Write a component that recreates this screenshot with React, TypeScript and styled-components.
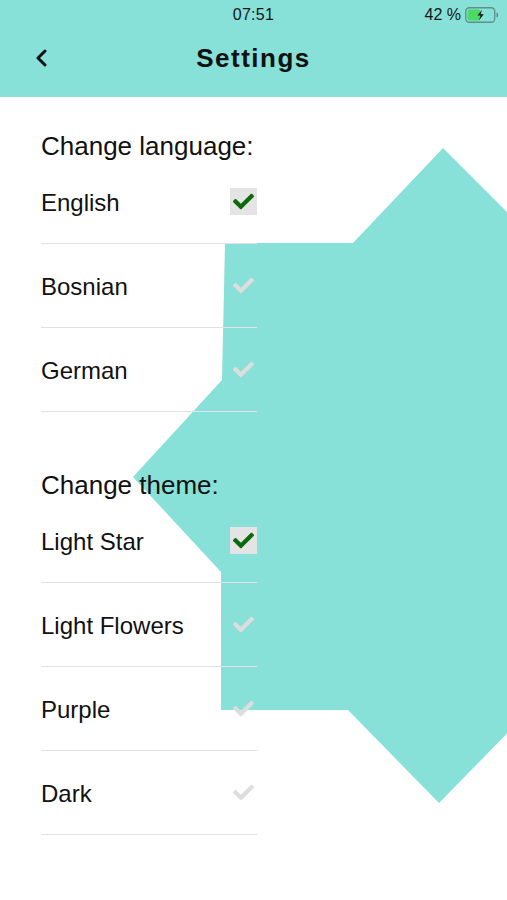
import React from 'react'
import styled, { createGlobalStyle } from 'styled-components'
import { FaCheck } from 'react-icons/fa'

const GlobalStyle = createGlobalStyle`
  body {
    margin: 0;
    background: #ffffff;
    font-family: "Liberation Sans", Arial, sans-serif;
    color: #111111;
  }
`

const TEAL = '#87e1d8'

const Page = styled.div`
  position: relative;
  width: 507px;
  min-height: 900px;
  background: #ffffff;
  overflow: hidden;
`

// big star sits behind the list
const StarLayer = styled.svg`
  position: absolute;
  top: 0;
  left: 0;
  width: 507px;
  height: 900px;
  z-index: 0;
  pointer-events: none;
`

const Header = styled.header`
  position: relative;
  z-index: 1;
  background: ${TEAL};
  padding-bottom: 11px;
`

const StatusBar = styled.div`
  height: 30px;
  display: grid;
  grid-template-columns: 1fr auto 1fr;
  align-items: center;
  font-size: 16px;
  color: #151515;
`

const Time = styled.span`
  grid-column: 2;
  letter-spacing: 0.3px;
`

const BatteryArea = styled.div`
  grid-column: 3;
  justify-self: end;
  display: flex;
  align-items: center;
  gap: 4px;
  padding-right: 8px;
`

const NavBar = styled.div`
  height: 56px;
  display: grid;
  grid-template-columns: 80px 1fr 80px;
  align-items: center;
`

const BackButton = styled.button`
  background: none;
  border: none;
  padding: 0 0 0 35px;
  height: 100%;
  display: flex;
  align-items: center;
  cursor: pointer;
`

const Title = styled.h1`
  margin: 0;
  text-align: center;
  font-size: 26px;
  font-weight: 700;
  letter-spacing: 1.5px;
  color: #111111;
`

const Content = styled.main`
  position: relative;
  z-index: 1;
  padding: 35px 41px 40px;
`

const Section = styled.section<{ $gap?: number }>`
  margin-top: ${p => p.$gap ?? 0}px;
`

const SectionTitle = styled.h2`
  margin: 0;
  font-size: 26px;
  font-weight: 400;
  line-height: 28px;
  color: #111111;
`

const List = styled.ul`
  list-style: none;
  margin: 0;
  padding: 0;
  width: 216px;
`

const Row = styled.li`
  height: 83px;
  box-sizing: content-box;
  display: flex;
  align-items: center;
  justify-content: space-between;
  border-bottom: 1px solid #e2e2e2;
  font-size: 24px;
`

const Label = styled.span`
  padding-top: 2px;
`

const CheckBox = styled.span<{ $on: boolean }>`
  width: 27px;
  height: 27px;
  display: flex;
  align-items: center;
  justify-content: center;
  background: ${p => (p.$on ? '#e4e4e4' : 'transparent')};
  color: ${p => (p.$on ? '#0b6a0b' : '#dddddd')};
`

const languages = [
  { name: 'English', on: true },
  { name: 'Bosnian', on: false },
  { name: 'German', on: false },
]

const themes = [
  { name: 'Light Star', on: true },
  { name: 'Light Flowers', on: false },
  { name: 'Purple', on: false },
  { name: 'Dark', on: false },
]

function Battery() {
  return (
    <svg width="34" height="16" viewBox="0 0 34 16">
      <rect x="0.75" y="0.75" width="29" height="14.5" rx="3.5" fill="none" stroke="#5d8f88" strokeWidth="1.3" />
      <rect x="2.5" y="2.5" width="13" height="11" rx="2" fill="#4cd964" />
      <path d="M31.5 5.5 q1.8 0 1.8 2.5 q0 2.5 -1.8 2.5 z" fill="#5d8f88" />
      <path d="M17 2.8 L12.5 8.6 H15.6 L14 13.2 L18.8 7.2 H15.6 Z" fill="#111" />
    </svg>
  )
}

function Chevron() {
  return (
    <svg width="13" height="18" viewBox="0 0 13 18">
      <polyline points="10,2 3,9 10,16" fill="none" stroke="#111" strokeWidth="3" strokeLinecap="round" strokeLinejoin="round" />
    </svg>
  )
}

function OptionList({ items }: { items: { name: string; on: boolean }[] }) {
  return (
    <List>
      {items.map(item => (
        <Row key={item.name}>
          <Label>{item.name}</Label>
          <CheckBox $on={item.on}>
            <FaCheck size={21} />
          </CheckBox>
        </Row>
      ))}
    </List>
  )
}

export default function App() {
  return (
    <Page>
      <GlobalStyle />
      <StarLayer viewBox="0 0 507 900">
        <polygon
          fill={TEAL}
          points="443,148 530,235 530,710 439,803 348,710 221,710 221,572 133,477 222,380 225,243 353,243"
        />
      </StarLayer>
      <Header>
        <StatusBar>
          <Time>07:51</Time>
          <BatteryArea>
            <span>42 %</span>
            <Battery />
          </BatteryArea>
        </StatusBar>
        <NavBar>
          <BackButton aria-label="back">
            <Chevron />
          </BackButton>
          <Title>Settings</Title>
        </NavBar>
      </Header>
      <Content>
        <Section>
          <SectionTitle>Change language:</SectionTitle>
          <OptionList items={languages} />
        </Section>
        <Section $gap={59}>
          <SectionTitle>Change theme:</SectionTitle>
          <OptionList items={themes} />
        </Section>
      </Content>
    </Page>
  )
}
